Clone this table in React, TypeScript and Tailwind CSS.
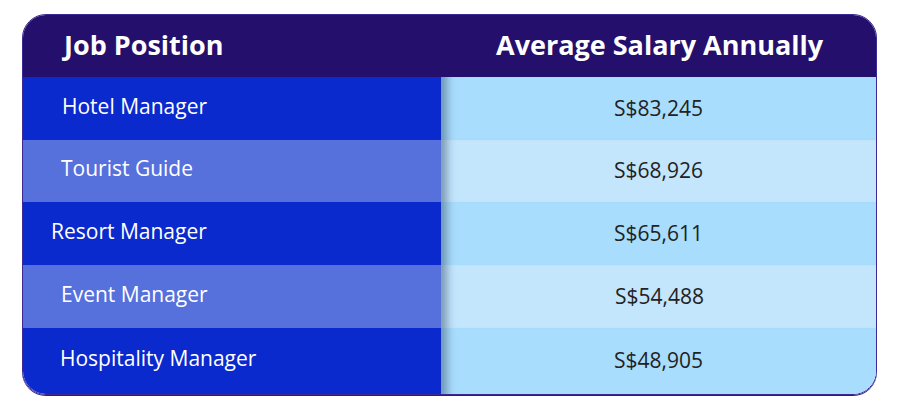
import React from 'react';

const rows = [
  { job: 'Hotel Manager', salary: 'S$83,245', pad: 'pl-[39px]', shift: '', h: 'h-[63px]' },
  { job: 'Tourist Guide', salary: 'S$68,926', pad: 'pl-[38px]', shift: '', h: 'h-[62px]' },
  { job: 'Resort Manager', salary: 'S$65,611', pad: 'pl-[28px]', shift: '', h: 'h-[63px]' },
  { job: 'Event Manager', salary: 'S$54,488', pad: 'pl-[38px]', shift: 'ml-[2px]', h: 'h-[63px]' },
  { job: 'Hospitality Manager', salary: 'S$48,905', pad: 'pl-[37px]', shift: '', h: 'flex-1' },
];

export default function App() {
  return (
    <div className="w-[900px] h-[408px] bg-white pt-[14px] pl-[22px]" style={{ fontFamily: '"Open Sans", "Noto Sans", sans-serif' }}>
      <div className="w-[855px] h-[381px] rounded-[24px] border border-[#3a2a92] overflow-hidden flex flex-col shadow-[0_1px_0_#2b1b86]">
        {/* Header */}
        <div className="h-[62px] bg-[#250f6d] flex items-center text-white font-bold text-[27px] shrink-0 pb-[2px]">
          <div className="w-[418px] pl-[41px]">Job Position</div>
          <div className="flex-1 pl-[55px]">Average Salary Annually</div>
        </div>

        {rows.map((r, i) => {
          const odd = i % 2 === 1;
          return (
            <div key={r.job} className={`flex ${r.h} shrink-0`}>
              <div className={`w-[418px] flex items-center text-white text-[21px] pb-[4px] ${r.pad} ${odd ? 'bg-[#5670dc]' : 'bg-[#0a2acd]'}`}>
                {r.job}
              </div>
              <div className={`flex-1 flex items-center justify-center text-[21px] text-[#222] shadow-[inset_14px_0_8px_-8px_rgba(40,60,90,0.45)] ${odd ? 'bg-[#c3e6fd]' : 'bg-[#a9ddfd]'}`}>
                <span className={r.shift}>{r.salary}</span>
              </div>
            </div>
          );
        })}
      </div>
    </div>
  );
}
